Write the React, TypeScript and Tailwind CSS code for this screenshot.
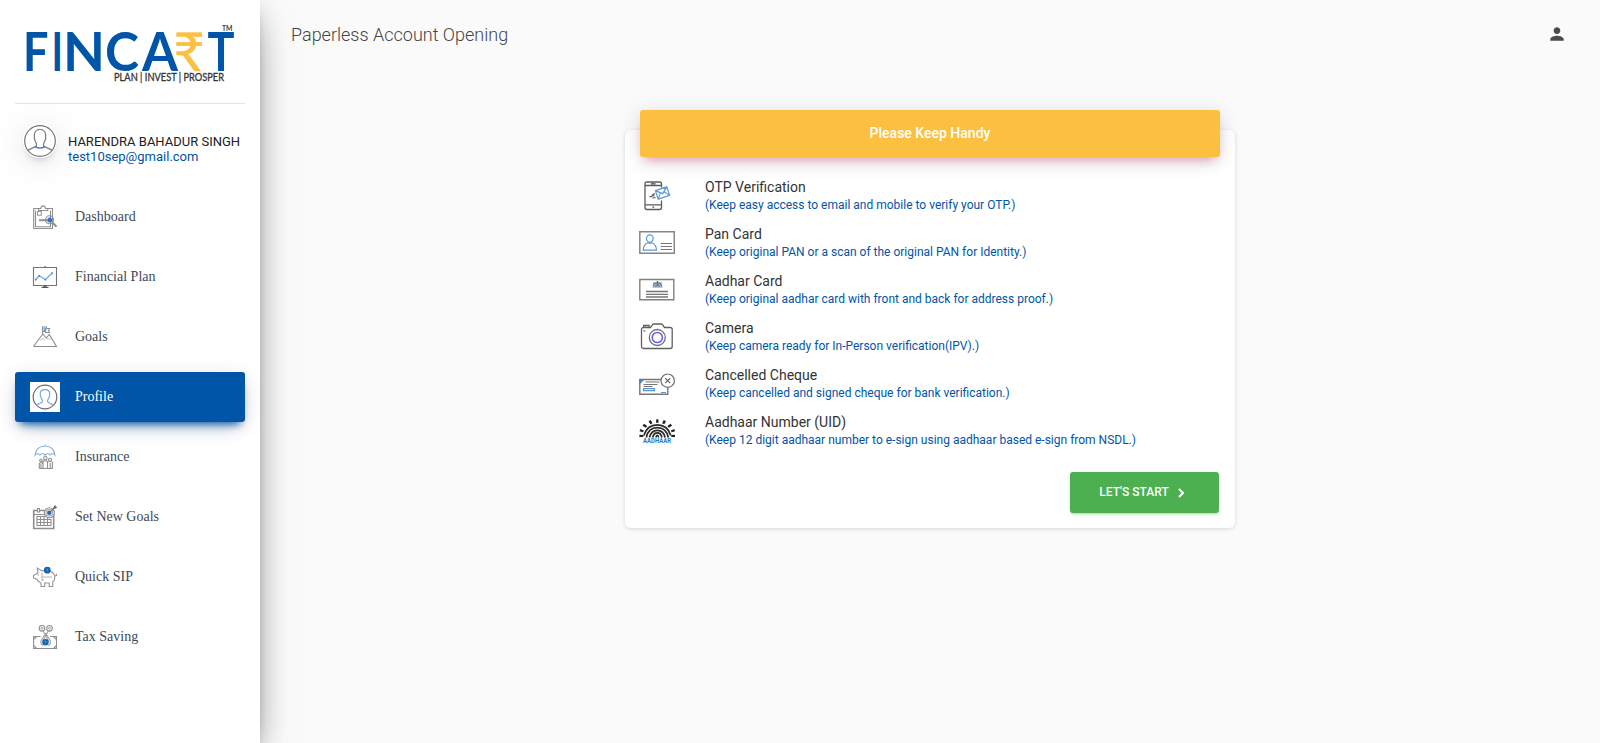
import type { ReactNode } from "react";
import { MdPerson } from "react-icons/md";

const GRAY = "#8f8f8f";
const BLUE = "#3f7fc6";

function NavIcon({ children, filled = false }: { children: ReactNode; filled?: boolean }) {
  return (
    <svg
      viewBox="0 0 30 30"
      className={filled ? "h-[30px] w-[30px] shrink-0 bg-white" : "h-[30px] w-[30px] shrink-0"}
      fill="none"
      stroke={GRAY}
      strokeWidth="1.1"
    >
      {children}
    </svg>
  );
}

function CardIcon({ children }: { children: ReactNode }) {
  return (
    <svg viewBox="0 0 36 36" className="h-9 w-9 shrink-0" fill="none" stroke="#777" strokeWidth="1.2">
      {children}
    </svg>
  );
}

function Logo() {
  return (
    <svg viewBox="0 0 230 103" className="h-[103px] w-[230px]" fontFamily="Lato, sans-serif">
      <g fill="#0055a8" fontSize="53.500" fontWeight="700">
        <text x="8" y="71" textLength="25.500" lengthAdjust="spacingAndGlyphs">F</text>
        <text x="36.500" y="71" textLength="11.500" lengthAdjust="spacingAndGlyphs">I</text>
        <text x="48" y="71" textLength="42" lengthAdjust="spacingAndGlyphs">N</text>
        <text x="90" y="71" textLength="34" lengthAdjust="spacingAndGlyphs">C</text>
        <text x="127" y="71" textLength="36" lengthAdjust="spacingAndGlyphs">A</text>
        <text x="192.500" y="71" textLength="27" lengthAdjust="spacingAndGlyphs">T</text>
      </g>
      <text x="158.500" y="71" fill="#fcc041" stroke="#fcc041" strokeWidth=".5" fontSize="53.500" fontWeight="400" textLength="31" lengthAdjust="spacingAndGlyphs">₹</text>
      <text x="207" y="30.500" fill="#3c3c3c" fontSize="8" fontWeight="700" textLength="10.500" lengthAdjust="spacingAndGlyphs">TM</text>
      <text x="99" y="81" fill="#333" stroke="#333" strokeWidth=".3" fontSize="10.500" fontWeight="400" textLength="110" lengthAdjust="spacingAndGlyphs">
        PLAN | INVEST | PROSPER
      </text>
    </svg>
  );
}

function Avatar() {
  return (
    <svg
      viewBox="0 0 34 34"
      fill="none"
      className="h-[34px] w-[34px] shrink-0 rounded-full bg-white shadow-[0_6px_10px_-6px_rgba(0,0,0,0.3),0_4px_35px_0_rgba(0,0,0,0.12)]"
    >
      <circle cx="17" cy="17" r="15.300" stroke="#777" strokeWidth="1.200" />
      <path d="M5 26.500c3-3 7.500-2.500 8.500-5 .5-1.500-.5-2.500-1.300-4.500-1.200-2-1-4.500-.8-6.500.4-3.500 2.600-5 5.600-5s5.200 1.500 5.600 5c.2 2 .4 4.500-.8 6.500-.8 2-1.800 3-1.300 4.500 1 2.500 5.500 2 8.500 5" stroke="#7a7a7a" strokeWidth="1.200" />
      <path d="M12 22.500c2.500 2.200 7.500 2.200 10 0" stroke="#2b70bd" strokeWidth="1.400" />
    </svg>
  );
}

const navItems: { label: string; icon: ReactNode }[] = [
  {
    label: "Dashboard",
    icon: (
      <NavIcon>
        <path d="M9 6.500H3.700v20h18.800V6.500H17M5.500 8.500v16.200h15V8.500" />
        <path d="M8.500 8.500v-2h2.300c.5-3.500 4.200-3.500 4.700 0h2.300v2z" />
        <path d="M7.500 9.500h3.800v3.800H7.500z" stroke="#999" />
        <path d="M9 18.200h8" strokeWidth="2" />
        <circle cx="19.500" cy="17.800" r="4" />
        <circle cx="19.700" cy="18" r="2.500" fill="#2d76c9" stroke="none" />
        <path d="m22.300 20.500 4.200 4.200" strokeWidth="2" />
      </NavIcon>
    ),
  },
  {
    label: "Financial Plan",
    icon: (
      <NavIcon>
        <path d="M3.500 5.500h23v18h-23z" stroke="#757575" />
        <path d="M15 4v1.500M13 25.500l2-2 2 2M11.500 25.500h7" stroke="#555" />
        <path d="m5.500 17.500 3.700-3.700 6.100 3.700 7-6.500" stroke="#6ba5dc" strokeWidth="1.200" />
        <path d="M5 17h1.500v1.500H5zM8.500 13H10v1.500H8.500zM14.700 17h1.500v1.500h-1.500zM21.500 10.300H23v1.500h-1.500z" fill={BLUE} stroke="none" />
      </NavIcon>
    ),
  },
  {
    label: "Goals",
    icon: (
      <NavIcon>
        <path d="M3.500 24.500h23l-7.200-12-3 3.500-3.500-4-9.300 12.500" stroke="#8b8b8b" />
        <path d="M9.500 17.500l2 .5 1.300-2 2 2.500M17 17l1.500-1 1 1.500 2-1.500" stroke="#bbb" strokeWidth=".8" />
        <path d="M12.500 12V5h4v1.500h3l-1 2 1 2h-4V9.500h-3" />
        <path d="M13.500 6h3v3h-3z" fill="#70a7dc" stroke="none" />
      </NavIcon>
    ),
  },
  {
    label: "Profile",
    icon: (
      <NavIcon filled>
        <circle cx="15" cy="15" r="11.800" stroke="#6d6d6d" strokeWidth="1.200" />
        <path d="M6.500 23c1.700-1.700 5.500-1.500 6-3.500.4-1.500-1-2-1.500-4-.8-1.800-.9-3-.7-4.500.4-2.300 2.200-3.500 4.700-3.500s4.300 1.200 4.700 3.500c.2 1.500.1 2.700-.7 4.500-.5 2-1.900 2.500-1.500 4 .5 2 4.300 1.800 6 3.500" stroke="#86b0df" strokeWidth="1.300" />
      </NavIcon>
    ),
  },
  {
    label: "Insurance",
    icon: (
      <NavIcon>
        <path d="M5.200 13C5.500 7.500 9.500 4 15 4s9.500 3.500 9.800 9c-1.200-1.700-3.300-1.700-4.700 0-1.400-1.700-3.700-1.700-5.100 0-1.400-1.700-3.700-1.700-5.100 0-1.400-1.700-3.500-1.700-4.700 0zM15 2.800V4M15 12v2" stroke="#7fafe0" />
        <circle cx="15.300" cy="16.200" r="1.700" />
        <circle cx="11" cy="18.500" r="1.300" />
        <circle cx="20" cy="17.800" r="1.500" />
        <path d="M13 26.500v-7c1-1 3.500-1 4.500 0v7zM9.300 26.500V21.500c.8-1 2.700-1 3.700 0M9.300 26.500h3.500M18.500 20c1-.8 3-.8 3.900.2v6.300h-4.500M11 22v4.500M20.200 21v5.500" />
      </NavIcon>
    ),
  },
  {
    label: "Set New Goals",
    icon: (
      <NavIcon>
        <path d="M3.700 8.500h20v18h-20z" strokeWidth="1.600" />
        <path d="M4 12.500h12" />
        <path d="M7.500 10V6.500h2V10z" fill="#fff" />
        <path d="M7 14.500h11M6.500 17.500h15M6.500 20.500h15M6.500 23.500h15M7 14v9.500M10.500 14v9.500M14 14v9.500M17.500 15v8.500M21 17v6.500" />
        <circle cx="19.300" cy="10.800" r="5" fill="#fff" />
        <circle cx="19.300" cy="10.800" r="3.300" stroke="#aaa" />
        <circle cx="19.300" cy="10.800" r="2.200" fill="#2769b7" stroke="none" />
        <path d="m19.300 10.800 5.500-5.500" stroke="#666" />
        <path d="m23 7 1-3 1.500-1 .3 1.700 1.500.3-1.300 1.500z" fill="#666" stroke="none" />
      </NavIcon>
    ),
  },
  {
    label: "Quick SIP",
    icon: (
      <NavIcon>
        <path d="M3.500 13.500 8 11 7.300 6l4.700 3c4-1 9-1 12 3 1.800 3 .6 6.500-1.300 7.800v4.700h-3.500V21h-4.500v3.500H11v-3.600C8.500 20 7.500 18.500 7 17.200l-3.500-1zM24.700 13.500c2.300.7 2.300-1 1.300-1.500M7.500 13h1.300" stroke="#959595" />
        <path d="M12 15h10M12 11v8l2-2" stroke="#aaa" strokeWidth=".9" />
        <circle cx="17.300" cy="8.200" r="3.400" fill="#1763b5" stroke="none" />
        <path d="M16.300 7.200h2M17.300 7.200v2.300" stroke="#8eb6e0" strokeWidth=".5" />
      </NavIcon>
    ),
  },
  {
    label: "Tax Saving",
    icon: (
      <NavIcon>
        <path d="M10.600 14.500h-7v12h22.900v-12H20M3.600 17.500l3-3M26.500 17.500l-3-3M3.600 23.500l3 3M26.500 23.500l-3 3" />
        <circle cx="12" cy="6.300" r="2.800" />
        <circle cx="19.500" cy="6.300" r="2.800" />
        <circle cx="12" cy="6.300" r="1" strokeWidth=".8" />
        <circle cx="19.500" cy="6.300" r="1" strokeWidth=".8" />
        <path d="M13.300 9 19 20M18.300 9l-6 11M15.700 11l-4.500 7.500c-1 2 0 4.500 2 5M15.700 11l4.500 7.500c.8 2 0 4.500-2 5" stroke="#a0a0a0" />
        <circle cx="15.500" cy="20.300" r="3.200" fill="#1763b5" stroke="none" />
        <path d="M14.500 19.300h2M15.500 19.300v2.300" stroke="#8eb6e0" strokeWidth=".5" />
      </NavIcon>
    ),
  },
];

const requirements: { title: string; note: string; icon: ReactNode }[] = [
  {
    title: "OTP Verification",
    note: "(Keep easy access to email and mobile to verify your OTP.)",
    icon: (
      <CardIcon>
        <path d="M22.500 9.500v-3.500a2 2 0 0 0-2-2H8a2 2 0 0 0-2 2v23.500a2 2 0 0 0 2 2h12.500a2 2 0 0 0 2-2v-7M6 7.500h16.500M6 26.800h16.500" stroke="#5c5c5c" strokeWidth="1.300" />
        <path d="M12 5.800h4.500M13.500 29.200h1.700" stroke="#444" strokeWidth="1.300" />
        <path d="M13 17l3-1.500M10.500 18.800l5-1.300M13.500 20l3-.5" stroke="#555" />
        <g transform="rotate(-18 23.500 15)" stroke="#5f9ad4">
          <path d="M17.500 10.500h12v9h-12zM17.500 10.500l6 5.200 6-5.200M17.500 19.500l4-5.300M29.500 19.500l-4-5.300" />
        </g>
      </CardIcon>
    ),
  },
  {
    title: "Pan Card",
    note: "(Keep original PAN or a scan of the original PAN for Identity.)",
    icon: (
      <CardIcon>
        <path d="M.8 6.800h34.500v21.500H.8z" stroke="#858585" strokeWidth="1.500" />
        <ellipse cx="10.800" cy="13.500" rx="3.300" ry="3.700" stroke="#5c97d3" />
        <path d="M4.200 25.200c0-4.500 2-6.500 4.800-7.500 1.200.8 2.500.8 3.700 0 2.800 1 4.800 3 4.800 7.500z" stroke="#5c97d3" />
        <path d="M21.700 18.500H33M21.700 21.500H33M21.700 24.500H33" />
      </CardIcon>
    ),
  },
  {
    title: "Aadhar Card",
    note: "(Keep original aadhar card with front and back for address proof.)",
    icon: (
      <CardIcon>
        <path d="M.8 7.500h34v20.200H.8z" stroke="#808080" strokeWidth="1.400" />
        <path d="M14.500 14.500c0-5 8-5 8 0M16.500 14.500c0-2.500 4-2.500 4 0M18.500 9v5.500" stroke="#6e7781" strokeWidth="1.500" />
        <path d="M14.500 10.500l1 1M22.500 10.500l-1 1M13.700 15h9.600" stroke="#5d90c0" />
        <path d="M7 19.500h22M7 22.300h22M7 25h22" strokeWidth="1.300" />
      </CardIcon>
    ),
  },
  {
    title: "Camera",
    note: "(Keep camera ready for In-Person verification(IPV).)",
    icon: (
      <CardIcon>
        <path d="M4 8.500h7.500l2-2.800a2 2 0 0 1 1.500-.7h7a2 2 0 0 1 1.500.7l2 2.800h5.700a2 2 0 0 1 2 2v17a2 2 0 0 1-2 2H4.500a2 2 0 0 1-2-2v-17a2 2 0 0 1 2-2M4.700 8.300V6.500H10v2M4.500 11.800h1.800" stroke="#606060" strokeWidth="1.300" />
        <circle cx="18.300" cy="18.500" r="8" stroke="#707070" strokeWidth="1.300" />
        <circle cx="18.300" cy="18.500" r="5.100" stroke="#6262f2" strokeWidth="1.500" />
      </CardIcon>
    ),
  },
  {
    title: "Cancelled Cheque",
    note: "(Keep cancelled and signed cheque for bank verification.)",
    icon: (
      <CardIcon>
        <path d="M.8 13.500h28v14.800H.8z" strokeWidth="1.400" />
        <path d="M.5 13h5.500L.5 18.500z" fill="#4b83bd" stroke="none" />
        <path d="M6.500 16h14M4.500 18.500h14M4.500 20.500h9" />
        <path d="M4.500 22.700h11v2h-11zM22 26.500h5" stroke="#5b94cd" />
        <circle cx="28.700" cy="14.700" r="6.700" fill="#fff" stroke="#707070" />
        <path d="m26.200 12.200 5 5M31.200 12.200l-5 5" stroke="#606060" />
      </CardIcon>
    ),
  },
  {
    title: "Aadhaar Number (UID)",
    note: "(Keep 12 digit aadhaar number to e-sign using aadhaar based e-sign from NSDL.)",
    icon: (
      <CardIcon>
        <g stroke="#2a2a2a" strokeWidth="1.700">
          <path d="M4.800 22.500c2-6.500 7-10.700 13.500-10.700S29.800 16 31.800 22.500M7.300 24.500c1.200-6 5-9.900 11-9.900s9.800 3.900 11 9.900M10.500 24.500c1-4.700 3.500-7.200 7.800-7.200s6.800 2.500 7.800 7.200M13.700 24.500c.6-3 2-4.700 4.600-4.700s4 1.700 4.600 4.700M17 24.500c.2-1.500.5-2.200 1.300-2.200s1.100.7 1.300 2.200" />
        </g>
        <path d="m17 9.800.3-3.600h2l.3 3.600zM11.300 11.200 9.600 8.200l2.200-1.200 1.700 3.300zM25.300 11.200 27 8.200 24.800 7l-1.700 3.300zM6.800 14.800 3.500 12.700 5 10.800l3.200 2.300zM29.800 14.800l3.300-2.100-1.500-1.900-3.200 2.300zM4 19.200l-3.400-1 .6-2.200 3.600 1.400zM32.600 19.200l3.400-1-.6-2.200-3.600 1.400zM4.200 24H.4v-2.300l4 .3zM32.400 24h3.600v-2.300l-3.800.3z" fill="#222" stroke="none" />
        <text x="4" y="30" textLength="28" lengthAdjust="spacingAndGlyphs" fontFamily="Roboto, sans-serif" fontSize="6.500" fontWeight="700" fill="#2f78b8" stroke="none">
          AADHAAR
        </text>
      </CardIcon>
    ),
  },
];

function Sidebar() {
  return (
    <aside className="relative z-10 flex w-[260px] shrink-0 flex-col bg-white px-[15px] shadow-[0_16px_38px_-12px_rgba(0,0,0,0.56),0_4px_25px_0_rgba(0,0,0,0.12),0_8px_10px_-5px_rgba(0,0,0,0.2)]">
      <div className="h-[104px] border-b border-[#e3e3e3]">
        <Logo />
      </div>
      <div className="flex h-[78px] pl-2 pt-5">
        <Avatar />
        <div className="whitespace-nowrap pl-[11px] pt-[10px] text-[13px] leading-[15px] text-[#212121]">
          <p>HARENDRA BAHADUR SINGH</p>
          <p className="text-[#0055a8]">test10sep@gmail.com</p>
        </div>
      </div>
      <nav className="flex flex-col gap-[10px] pt-[10px] font-['Liberation_Serif',serif] text-sm">
        {navItems.map(({ label, icon }) => (
          <a
            key={label}
            className={
              label === "Profile"
                ? "flex h-[50px] items-center gap-[15px] rounded-[3px] bg-[#0055a8] px-[15px] text-white shadow-[0_12px_20px_-10px_rgba(0,85,168,0.28),0_4px_20px_0_rgba(0,0,0,0.12),0_7px_8px_-5px_rgba(0,85,168,0.9)]"
                : "flex h-[50px] items-center gap-[15px] px-[15px] text-[#3c4858]"
            }
          >
            {icon}
            <span>{label}</span>
          </a>
        ))}
      </nav>
    </aside>
  );
}

export default function App() {
  return (
    <div className="flex h-[743px] overflow-hidden bg-[#fafafa] font-['Roboto',sans-serif]">
      <Sidebar />
      <div className="flex flex-1 flex-col">
        <header className="flex h-[70px] items-center justify-between pl-[31px] pr-[33px]">
          <h1 className="text-lg font-light text-[#444]">Paperless Account Opening</h1>
          <MdPerson className="-mt-[3px] h-5 w-5 text-[#4a4a4a]" />
        </header>
        <main className="flex justify-center pt-[60px]">
          <section className="h-[398px] w-[610px] rounded-md bg-white px-[15px] shadow-[0_1px_4px_0_rgba(0,0,0,0.14)]">
            <h2 className="-mt-5 flex h-[47px] items-center justify-center rounded-[3px] bg-[#fcc041] pb-0.5 text-sm font-medium text-white shadow-[0_4px_20px_0_rgba(0,0,0,0.14),0_7px_10px_-5px_rgba(233,30,99,0.4)]">
              Please Keep Handy
            </h2>
            <ul className="-ml-px mt-[21px]">
              {requirements.map(({ title, note, icon }) => (
                <li key={title} className="flex h-[47px] gap-[30px]">
                  {icon}
                  <div>
                    <p className="text-sm leading-[18px] text-[#333]">{title}</p>
                    <p className="text-xs leading-[19px] text-[#0055a8]">{note}</p>
                  </div>
                </li>
              ))}
            </ul>
            <div className="flex justify-end pr-px pt-3">
              <button className="flex h-[41px] w-[149px] items-center justify-center gap-[9px] rounded-[3px] bg-[#4caf50] pb-0.5 pr-[5px] text-xs font-medium text-white shadow-[0_2px_2px_0_rgba(76,175,80,0.14),0_3px_1px_-2px_rgba(76,175,80,0.2),0_1px_5px_0_rgba(76,175,80,0.12)]">
                LET&apos;S START
                <svg viewBox="0 0 7 10" className="mt-[3px] h-[10px] w-[7px]" fill="none" stroke="currentColor" strokeWidth="2">
                  <path d="m1 1 4 4-4 4" />
                </svg>
              </button>
            </div>
          </section>
        </main>
      </div>
    </div>
  );
}
